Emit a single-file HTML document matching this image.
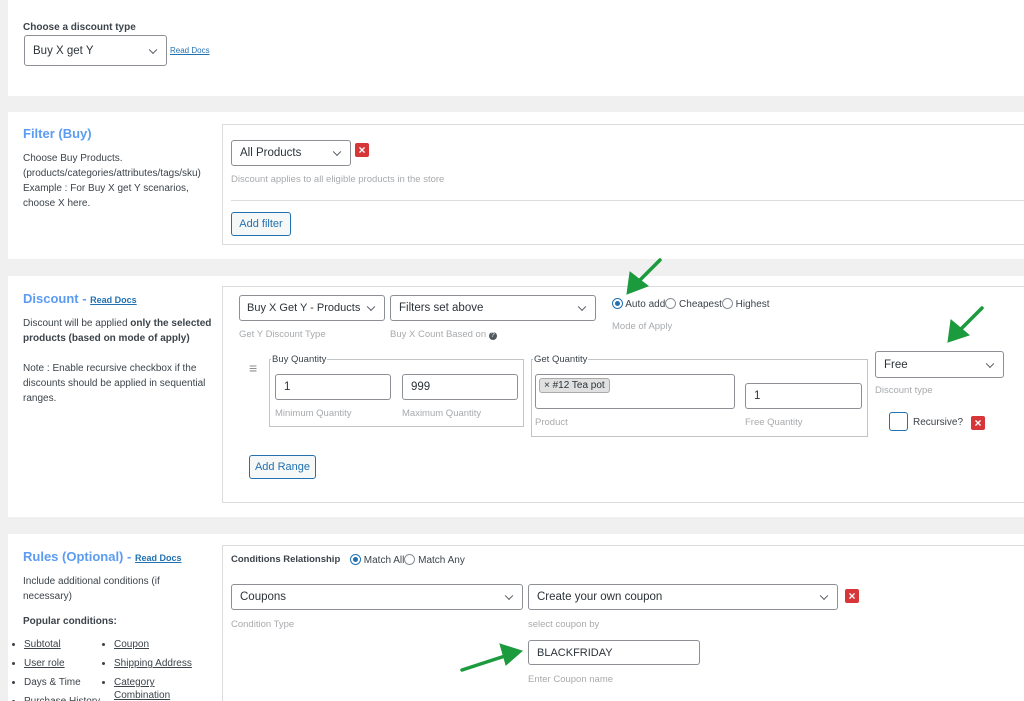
<!DOCTYPE html><html style="height:701px;overflow:hidden"><head><style>
body{margin:0;width:1024px;height:701px;background:#f0f0f1;font-family:"Liberation Sans",sans-serif;position:relative;overflow:hidden;color:#3c434a}
.a{position:absolute}
.p{position:absolute;left:8px;right:0;background:#fff}
.box{position:absolute;border:1px solid #dcdcde;background:#fff}
.sel{position:absolute;border:1px solid #8c8f94;border-radius:3px;background:#fff;font-size:11.5px;color:#2c3338;box-sizing:border-box;padding:0 8px;display:flex;align-items:center;white-space:nowrap;overflow:hidden}
.sel:after{content:"";position:absolute;right:10px;top:50%;width:5px;height:5px;border-right:1.3px solid #50575e;border-bottom:1.3px solid #50575e;transform:translateY(-70%) rotate(45deg)}
.inp{position:absolute;border:1px solid #8c8f94;border-radius:3px;background:#fff;font-size:11.5px;color:#2c3338;box-sizing:border-box;padding:0 8px;display:flex;align-items:center}
.h{font-size:9.5px;color:#a7aaad}
.t{font-size:10px;color:#3c434a;line-height:15px}
.ttl{font-size:13px;font-weight:bold;color:#5b9cf2}
.x{position:absolute;width:14px;height:14px;background:#d63638;color:#fff;font-size:12px;font-weight:bold;text-align:center;line-height:14px;border-radius:2px}
.btn{position:absolute;border:1px solid #2271b1;border-radius:3px;background:#f6f7f7;color:#2271b1;font-size:11px;display:flex;align-items:center;justify-content:center;box-sizing:border-box}
.rad{display:inline-block;width:11px;height:11px;border:1px solid #8c8f94;border-radius:50%;vertical-align:-2px;box-sizing:border-box;position:relative}
.rad.on{border-color:#2271b1}.rad.on:after{content:"";position:absolute;left:2px;top:2px;width:5px;height:5px;border-radius:50%;background:#2271b1}
fieldset{position:absolute;border:1px solid #c3c4c7;margin:0;padding:0}
legend{font-size:9.5px;color:#3c434a;padding:0 1px;margin-left:1px}
a{color:#2271b1}
ul{margin:0;padding:0 0 0 18px;font-size:10px;line-height:19px}
</style></head><body>
<div class="a" style="left:829px;top:0;width:52px;height:5px;background:#d63638;border-radius:0 0 3px 3px"></div>
<div class="p" style="top:0;height:96px"></div>
<div class="a" style="left:23px;top:22px;font-size:10px;font-weight:bold;color:#3c434a">Choose a discount type</div>
<div class="sel" style="left:24px;top:35px;width:143px;height:31px">Buy X get Y</div>
<div class="a" style="left:170px;top:46px;font-size:8px"><a href="#">Read Docs</a></div>

<div class="p" style="top:112px;height:147px"></div>
<div class="a ttl" style="left:23px;top:126px">Filter (Buy)</div>
<div class="a t" style="left:23px;top:151px">Choose Buy Products.<br>(products/categories/attributes/tags/sku)<br>Example : For Buy X get Y scenarios,<br>choose X here.</div>
<div class="box" style="left:222px;top:124px;width:802px;height:119px;border-right:0"></div>
<div class="sel" style="left:231px;top:140px;width:120px;height:26px">All Products</div>
<div class="x" style="left:355px;top:143px">×</div>
<div class="a h" style="left:231px;top:174px">Discount applies to all eligible products in the store</div>
<div class="a" style="left:231px;top:200px;width:793px;height:1px;background:#dcdcde"></div>
<div class="btn" style="left:231px;top:212px;width:60px;height:24px">Add filter</div>

<div class="p" style="top:276px;height:241px"></div>
<div class="a" style="left:23px;top:290px"><span class="ttl">Discount - </span><a href="#" style="font-size:9px;font-weight:bold">Read Docs</a></div>
<div class="a t" style="left:23px;top:316px;width:190px">Discount will be applied <b>only the selected products (based on mode of apply)</b><br><br>Note : Enable recursive checkbox if the discounts should be applied in sequential ranges.</div>
<div class="box" style="left:222px;top:286px;width:802px;height:215px;border-right:0"></div>
<div class="sel" style="left:239px;top:295px;width:146px;height:26px;font-size:11px;padding-left:7px">Buy X Get Y - Products</div>
<div class="a h" style="left:239px;top:329px">Get Y Discount Type</div>
<div class="sel" style="left:390px;top:295px;width:206px;height:26px">Filters set above</div>
<div class="a h" style="left:390px;top:329px">Buy X Count Based on <span style="display:inline-block;width:8px;height:8px;border-radius:50%;background:#50575e;color:#fff;font-size:7px;text-align:center;line-height:8px">?</span></div>
<div class="a" style="left:612px;top:298px;font-size:10px"><span class="rad on"></span> Auto add<span class="rad"></span> Cheapest<span class="rad"></span> Highest</div>
<div class="a h" style="left:612px;top:321px">Mode of Apply</div>
<div class="a" style="left:249px;top:366px;width:10px;font-size:14px;color:#8c8f94;line-height:5px">≡</div>
<fieldset style="left:269px;top:354px;width:253px;height:71px"><legend>Buy Quantity</legend></fieldset>
<div class="inp" style="left:275px;top:374px;width:116px;height:26px">1</div>
<div class="inp" style="left:402px;top:374px;width:116px;height:26px">999</div>
<div class="a h" style="left:275px;top:408px">Minimum Quantity</div>
<div class="a h" style="left:402px;top:408px">Maximum Quantity</div>
<fieldset style="left:531px;top:354px;width:335px;height:81px"><legend>Get Quantity</legend></fieldset>
<div class="inp" style="left:535px;top:374px;width:200px;height:35px;align-items:flex-start;padding:3px"><span style="background:#e0e0e0;border:1px solid #aaa;border-radius:3px;font-size:10px;padding:1px 4px">× #12 Tea pot</span></div>
<div class="inp" style="left:745px;top:383px;width:117px;height:26px">1</div>
<div class="a h" style="left:535px;top:417px">Product</div>
<div class="a h" style="left:745px;top:417px">Free Quantity</div>
<div class="sel" style="left:875px;top:351px;width:129px;height:27px">Free</div>
<div class="a h" style="left:875px;top:385px">Discount type</div>
<div class="a" style="left:889px;top:412px;width:19px;height:19px;border:1px solid #2271b1;border-radius:3px;box-sizing:border-box"></div>
<div class="a" style="left:913px;top:417px;font-size:10px">Recursive?</div>
<div class="x" style="left:971px;top:416px">×</div>
<div class="btn" style="left:249px;top:455px;width:67px;height:24px">Add Range</div>

<div class="p" style="top:534px;height:167px"></div>
<div class="a" style="left:23px;top:548px"><span class="ttl">Rules (Optional) - </span><a href="#" style="font-size:9px;font-weight:bold">Read Docs</a></div>
<div class="a t" style="left:23px;top:574px;width:170px">Include additional conditions (if necessary)</div>
<div class="a t" style="left:23px;top:614px;font-weight:bold">Popular conditions:</div>
<ul class="a" style="left:6px;top:635px;width:85px"><li><u>Subtotal</u></li><li><u>User role</u></li><li>Days &amp; Time</li><li>Purchase History</li></ul>
<ul class="a" style="left:96px;top:635px;width:82px;line-height:19px"><li><u>Coupon</u></li><li style="white-space:nowrap"><u>Shipping Address</u></li><li style="line-height:13px;padding-top:3px"><u>Category Combination</u></li></ul>
<div class="box" style="left:222px;top:545px;width:802px;height:170px;border-right:0"></div>
<div class="a" style="left:231px;top:554px;font-size:9.5px;font-weight:bold">Conditions Relationship</div>
<div class="a" style="left:350px;top:554px;font-size:10px"><span class="rad on"></span> Match All<span class="rad"></span> Match Any</div>
<div class="sel" style="left:231px;top:584px;width:292px;height:26px">Coupons</div>
<div class="a h" style="left:231px;top:619px">Condition Type</div>
<div class="sel" style="left:528px;top:584px;width:310px;height:26px">Create your own coupon</div>
<div class="a h" style="left:528px;top:619px">select coupon by</div>
<div class="x" style="left:845px;top:589px">×</div>
<div class="inp" style="left:528px;top:640px;width:172px;height:25px;font-size:11px">BLACKFRIDAY</div>
<div class="a h" style="left:528px;top:674px">Enter Coupon name</div>

<svg class="a" style="left:0;top:0" width="1024" height="701">
<g fill="#1c9a3e" stroke="#1c9a3e" stroke-width="3.5" stroke-linecap="round">
<line x1="660" y1="260" x2="637" y2="283"/><polygon points="627,294 630,272 648,286" stroke-width="1"/>
<line x1="982" y1="308" x2="960" y2="330"/><polygon points="948,342 951,320 969,335" stroke-width="1"/>
<line x1="462" y1="670" x2="505" y2="656"/><polygon points="522,651 500,644 506,665" stroke-width="1"/>
</g></svg>
</body></html>
